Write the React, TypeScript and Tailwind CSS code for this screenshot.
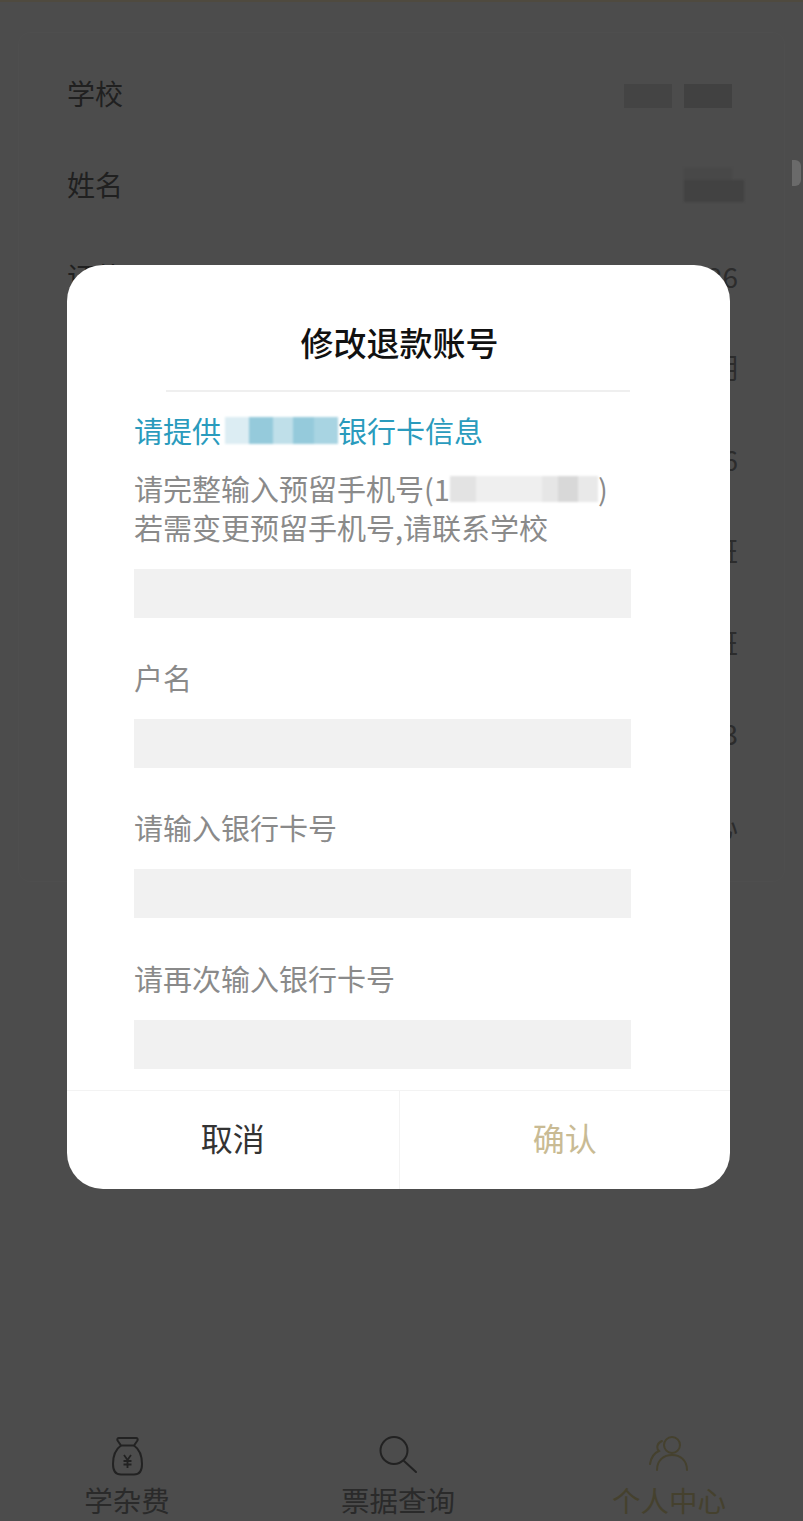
const font = { fontFamily: '"Noto Sans CJK SC", "Noto Sans", sans-serif' }

const rows = [
  { label: '学校', tail: '' },
  { label: '姓名', tail: '' },
  { label: '证件号', tail: '26' },
  { label: '班级', tail: '明' },
  { label: '学号', tail: '6' },
  { label: '年级', tail: '班' },
  { label: '专业', tail: '班' },
  { label: '手机', tail: '3' },
  { label: '账号', tail: '心' },
]

function Blur({ className }: { className: string }) {
  return <span className={`inline-block ${className}`} />
}

function Field({ label }: { label: string }) {
  return (
    <div>
      <p className="h-[39px] text-[29px] leading-[37px] text-[#8a8a8a]">{label}</p>
      <div className="mt-[21px] h-[49px] bg-[#f1f1f1]" />
    </div>
  )
}

function BagIcon() {
  return (
    <svg width="40" height="45" viewBox="0 0 40 45" fill="none" stroke="#222" strokeWidth="2">
      <path d="M12 3h17c1.500 0 2 1 1.500 2.500L27 10.500H14L10.500 5.500C10 4 10.500 3 12 3z" strokeLinejoin="round" />
      <path d="M14 10.500C9 14 6 21 6 29c0 7 3 10.500 8 10.500h13c5 0 8-3.500 8-10.500 0-8-3-15-8-18.500" />
      <path d="M17 20l3.500 5 3.500-5M20.500 25v8M16.500 26h8M16.500 29.500h8" strokeWidth="1.800" />
    </svg>
  )
}

function SearchIcon() {
  return (
    <svg width="40" height="45" viewBox="0 0 40 45" fill="none" stroke="#222" strokeWidth="2">
      <circle cx="16" cy="15.500" r="13.500" />
      <path d="M26 26l12 11" strokeLinecap="round" />
    </svg>
  )
}

function PeopleIcon() {
  return (
    <svg width="40" height="45" viewBox="0 0 40 45" fill="none" stroke="#45412e" strokeWidth="2">
      <circle cx="23" cy="10" r="8" />
      <path d="M8 35C8 25 15 20 23 20c8 0 15 5 15 15" strokeLinecap="round" />
      <path d="M13 6C8 8 7 13 10 16 5 18 2 23 1 29" strokeLinecap="round" />
    </svg>
  )
}

export default function App() {
  return (
    <div className="relative h-[1521px] w-full overflow-hidden bg-[#4c4c4c]" style={font}>
      <div className="h-[2px] bg-[#4f4a3f]" />

      {/* page behind the dialog */}
      <div className="mx-[18px] mt-[30px] h-[850px] rounded-[12px] border border-[#4e4e4e] pl-[48px] pr-[46px] pt-[14px]">
        {rows.map((r, i) => (
          <div key={i} className="flex h-[91.500px] items-center justify-between text-[28px] text-[#202020]">
            <span>{r.label}</span>
            <span className="text-[#2c2c2c]">{r.tail}</span>
          </div>
        ))}
      </div>

      {/* blurred values */}
      <div className="absolute left-[624px] top-[84px] flex h-[24px] gap-[12px]">
        <Blur className="w-[48px] bg-[#444444]" />
        <Blur className="w-[48px] bg-[#414141]" />
      </div>
      <div className="absolute left-[684px] top-[168px] h-[36px] w-[60px] blur-[1px]">
        <div className="h-[12px] w-[48px] bg-[#484848]" />
        <div className="h-[22px] w-[60px] bg-[#424242]" />
      </div>
      <div className="absolute left-[792px] top-[160px] h-[26px] w-[9px] rounded-r-[6px] bg-[#6a6a6a]" />

      {/* bottom nav */}
      <div className="absolute bottom-0 left-0 right-0 grid h-[86px] grid-cols-[254px_288px_254px]">
        <div className="flex flex-col items-center">
          <BagIcon />
          <span className="text-[28.500px] leading-[40px] text-[#2a2a2a]">学杂费</span>
        </div>
        <div className="flex flex-col items-center">
          <SearchIcon />
          <span className="text-[28.500px] leading-[40px] text-[#2a2a2a]">票据查询</span>
        </div>
        <div className="flex flex-col items-center">
          <PeopleIcon />
          <span className="text-[28.500px] leading-[40px] text-[#45412e]">个人中心</span>
        </div>
      </div>

      {/* dialog */}
      <div className="absolute left-[67px] top-[265px] flex h-[924px] w-[663px] flex-col overflow-hidden rounded-[36px] bg-white">
        <h2 className="mt-[53px] h-[48px] pl-[2px] text-center text-[33px] font-medium leading-[48px] text-[#111]">修改退款账号</h2>
        <div className="ml-[99px] mr-[100px] mt-[24px] h-[2px] bg-[#efefef]" />

        <div className="flex-1 pl-[67px] pr-[99px]">
          <p className="mt-[17px] flex h-[42px] items-center text-[29px] leading-[42px] text-[#2a9bbd]">
            请提供
            <span className="ml-[4px] flex h-[27px] w-[113px] blur-[1px]">
              <Blur className="w-[24px] bg-[#dcedf3]" />
              <Blur className="w-[24px] bg-[#95cadb]" />
              <Blur className="w-[20px] bg-[#bfdfe9]" />
              <Blur className="w-[21px] bg-[#95cadb]" />
              <Blur className="w-[24px] bg-[#a8d4e2]" />
            </span>
            <span>银行卡信息</span>
          </p>
          <p className="mt-[18px] flex h-[39px] items-center text-[29px] leading-[39px] text-[#8a8a8a]">
            请完整输入预留手机号(1
            <span className="flex h-[26px] w-[148px] blur-[1px]">
              <Blur className="w-[26px] bg-[#e3e3e3]" />
              <Blur className="w-[66px] bg-[#efefef]" />
              <Blur className="w-[16px] bg-[#e6e6e6]" />
              <Blur className="w-[20px] bg-[#d8d8d8]" />
              <Blur className="w-[20px] bg-[#e9e9e9]" />
            </span>
            )
          </p>
          <p className="h-[39px] text-[29px] leading-[39px] text-[#8a8a8a]">若需变更预留手机号,请联系学校</p>
          <div className="mt-[22px] h-[49px] bg-[#f1f1f1]" />

          <div className="mt-[41px] flex flex-col gap-[41px]">
            <Field label="户名" />
            <Field label="请输入银行卡号" />
            <div className="pt-[1px]">
              <Field label="请再次输入银行卡号" />
            </div>
          </div>
        </div>

        <div className="grid h-[99px] grid-cols-2 border-t border-[#f3f3f3]">
          <button className="pb-[7px] text-[32px] text-[#333]">取消</button>
          <button className="border-l border-[#f3f3f3] pb-[7px] text-[32px] text-[#c9bb94]">确认</button>
        </div>
      </div>
    </div>
  )
}
